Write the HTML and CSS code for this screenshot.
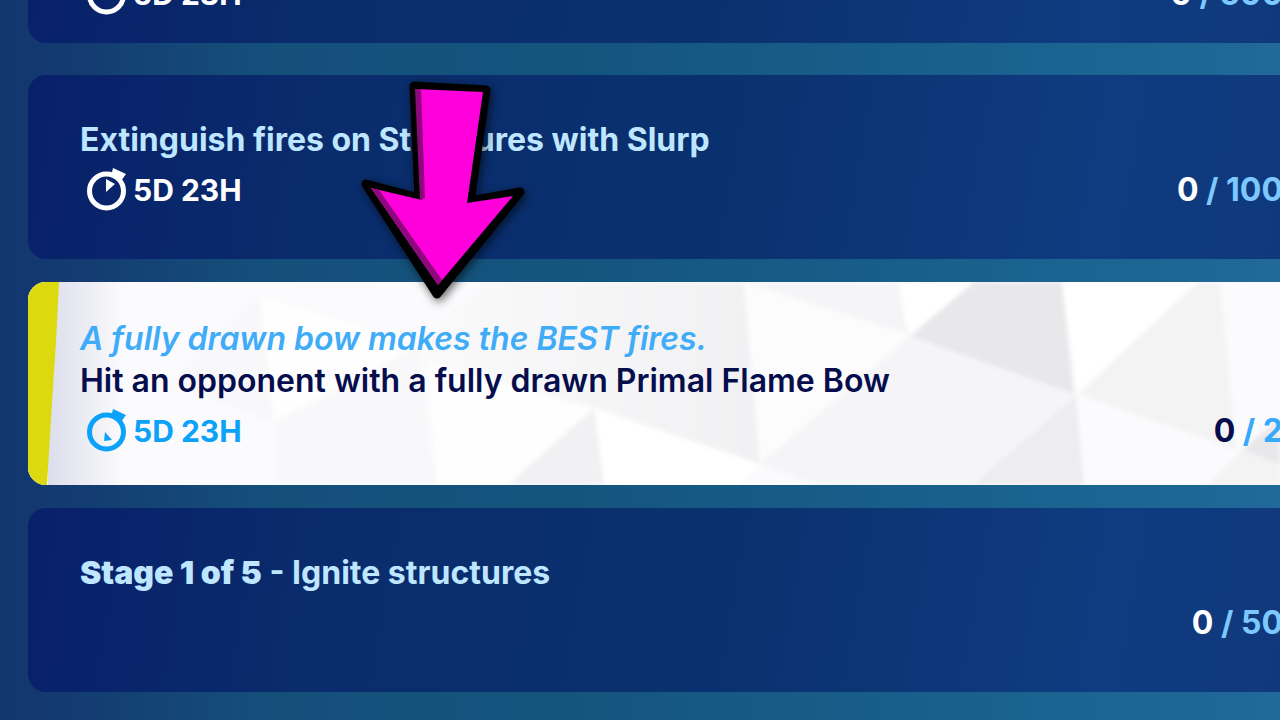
FILE: index.html
```html
<!DOCTYPE html>
<html lang="en">
<head>
<meta charset="utf-8">
<title>Quests</title>
<link rel="stylesheet" href="styles.css">
</head>
<body>
<svg class="sprite" aria-hidden="true">
  <symbol id="watch" viewBox="0 0 42 44">
    <circle cx="20.500" cy="23" r="17" fill="none" stroke="currentColor" stroke-width="5"/>
    <path d="M27 0 L40 6 L35 13 L25 9 Z" fill="currentColor"/>
  </symbol>
</svg>
<main class="quests">
  <article class="card card-first">
    <h2 class="title">Ignite structures</h2>
    <div class="row">
      <span class="time"><svg class="watch"><use href="#watch"/><path d="M20 11 L29 16 L20 24 Z" fill="currentColor"/></svg>5D 23H</span>
      <span class="count"><b>0</b> / 500</span>
    </div>
  </article>
  <article class="card card-plain">
    <h2 class="title">Extinguish fires on Structures with Slurp</h2>
    <div class="row">
      <span class="time"><svg class="watch"><use href="#watch"/><path d="M20 11 L29 16 L20 24 Z" fill="currentColor"/></svg>5D 23H</span>
      <span class="count"><b>0</b> / 100</span>
    </div>
    <svg class="arrow" viewBox="0 0 180 234" aria-hidden="true">
      <path class="arrow-line" d="M62 15 L134 19 L118 130 L168 121 L85 223 L14 113 L67 127 Z"/>
      <path fill="#ff00dc" d="M64 18 L131 21 L115 132 L161 125 L86 214 L19 117 L70 129 Z"/>
      <path fill="#8d087c" d="M63 18 L69 18 L73 127 L68 129 Z M19 117 L27 119 L90 209 L86 214 Z"/>
    </svg>
  </article>
  <article class="card card-active">
    <svg class="facets" viewBox="0 0 1252 203" preserveAspectRatio="none" aria-hidden="true">
      <defs>
        <linearGradient id="edge" x1="0" x2="1" y1="0" y2="0"><stop offset="0" stop-color="#dcdeeb"/><stop offset="1" stop-color="#fbfbfd"/></linearGradient>
        <linearGradient id="f1" x1="0" x2="1" y1="0" y2="0"><stop offset="0" stop-color="#fafafb"/><stop offset="1" stop-color="#f1f1f3"/></linearGradient>
      </defs>
      <path fill="#fbfbfd" d="M0 0H1252V203H0Z"/>
      <path fill="url(#edge)" d="M20 0H95V203H20Z"/>
      <g class="soft">
        <path fill="#f8f8fa" d="M232 14 L246 140 L140 100 Z"/>
        <path fill="#fefefe" d="M232 14 L390 62 L246 140 Z"/>
        <path fill="#f8f8fa" d="M246 140 L390 66 L408 203 H252 Z"/>
        <path fill="#fefefe" d="M400 80 L566 126 L480 203 H410 Z"/>
        <path fill="url(#f1)" d="M390 62 L460 0 H716 L732 182 L566 126 L400 80 Z"/>
        <path fill="#fff" d="M566 126 L732 182 L710 203 H576 Z"/>
        <path fill="#f1f1f3" d="M566 126 L576 203 H480 Z"/>
        <path fill="#fcfcfd" d="M716 0 L880 52 L732 182 Z"/>
        <path fill="#f5f5f7" d="M716 0 H870 L880 52 Z"/>
        <path fill="#f5f5f7" d="M732 182 L882 54 L1048 112 L1054 203 H790 Z"/>
        <path fill="#fff" d="M870 0 H946 L882 54 Z"/>
        <path fill="#e8e8eb" d="M882 54 L946 0 H1034 L1046 112 Z"/>
        <path fill="#fff" d="M1034 0 H1170 L1050 112 Z"/>
        <path fill="#ededf0" d="M1048 114 L1056 203 H945 Z"/>
        <path fill="#f3f3f4" d="M1050 112 L1170 0 H1192 L1208 168 Z"/>
        <path fill="#fbfbfd" d="M1050 112 L1208 168 L1180 203 H1056 Z"/>
        <path fill="#f3f3f4" d="M1214 168 L1252 182 V203 H1180 Z"/>
        <path fill="#e8e8eb" d="M1214 168 L1252 136 V182 Z"/>
      </g>
      <path fill="#dcd90f" d="M0 0H31L28 60L24 120L19 203H0Z"/>
    </svg>
    <p class="hint">A fully drawn bow makes the BEST fires.</p>
    <h2 class="title">Hit an opponent with a fully drawn Primal Flame Bow</h2>
    <div class="row">
      <span class="time"><svg class="watch"><use href="#watch"/><path d="M19 23 L26 31 L18 32 Z" fill="currentColor"/></svg>5D 23H</span>
      <span class="count"><b>0</b> / 2</span>
    </div>
  </article>
  <article class="card card-plain">
    <h2 class="title"><strong>Stage 1 of 5</strong> - Ignite structures</h2>
    <div class="row row-low">
      <span class="count"><b>0</b> / 50</span>
    </div>
  </article>
</main>
</body>
</html>
```

FILE: styles.css
```css
* { box-sizing: border-box; }
body {
  margin: 0;
  min-height: 100vh;
  overflow: hidden;
  font-family: Inter, "Open Sans", sans-serif;
  font-size: 32px;
  line-height: 42px;
  background:
    linear-gradient(90deg, #12306ccc 0, #12306c00 260px),
    linear-gradient(90deg, #154a78 0%, #14557e 45%, #1a628f 80%, #206998 100%);
}
.sprite { position: absolute; width: 0; height: 0; }
.quests {
  display: flex;
  flex-direction: column;
  gap: 23px;
  padding-left: 28px;
}
.card {
  position: relative;
  padding: 44px 0 44px 52px;
  border-radius: 18px 0 0 18px;
  background: linear-gradient(100deg, #08206a 0%, #0a2c6c 25%, #0a316f 55%, #103b80 85%, #10397d 100%);
}
.card-first { margin-top: -121px; margin-bottom: 9px; padding-bottom: 24px; }
.title { margin: 0; font-size: 32px; font-weight: 700; color: #bfe6ff; white-space: nowrap; }
.title strong { font-weight: 900; }
.row { display: flex; justify-content: space-between; align-items: center; height: 50px; margin-top: 4px; }
.row-low { justify-content: flex-end; }
.time { display: flex; align-items: center; gap: 5px; padding-left: 6px; color: #fff; font-size: 30px; font-weight: 700; }
.watch { width: 42px; height: 44px; }
.count { margin-right: -3px; color: #7cc8ff; font-weight: 700; white-space: nowrap; }
.count b { color: #fff; font-weight: 700; }
.card-active { overflow: hidden; padding: 36px 0 29px 52px; background: #fbfbfd; }
.facets { position: absolute; inset: 0; width: 100%; height: 100%; }
.soft { filter: blur(2px); }
.card-active > :not(.facets) { position: relative; }
.hint { margin: 0; font-weight: 600; font-style: italic; color: #40acf8; white-space: nowrap; }
.card-active .title { color: #060d4c; font-weight: 600; }
.card-active .time { color: #0ba2f8; }
.card-active .count { color: #35a9fa; }
.card-active .count b { color: #060d4c; }
.card-active .facets { position: absolute; }
.arrow {
  position: absolute;
  z-index: 2;
  left: 324px;
  top: -4px;
  width: 180px;
  height: 234px;
  filter: drop-shadow(2px 3px 5px #0009);
}
.arrow-line { fill: #000; stroke: #000; stroke-width: 9px; stroke-linejoin: round; }
```
